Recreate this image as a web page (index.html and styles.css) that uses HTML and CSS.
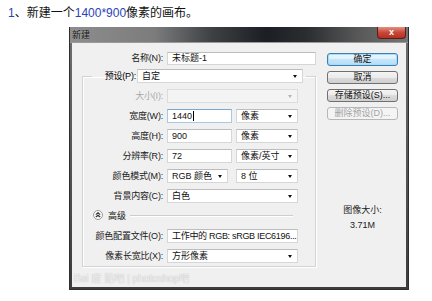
FILE: index.html
```html
<!DOCTYPE html>
<html lang="zh-CN">

<head>
  <meta charset="UTF-8">
  <title>新建</title>
  <link rel="stylesheet" href="styles.css">
</head>

<body>
  <p class="caption"><span class="num">1</span>、新建一个<span class="num">1400*900</span>像素的画布。</p>

  <div class="dialog">
    <div class="titlebar">
      <span class="title">新建</span>
      <span class="close">x</span>
    </div>

    <div class="client">
      <div class="form">
        <div class="nameRow">
          <div class="lbl">名称(N):</div>
          <div class="field">未标题-1</div>
        </div>

        <fieldset class="group">
          <legend>
            <span class="lbl presetLbl">预设(P):</span>
            <span class="field select presetSel">自定<i class="arrow"></i></span>
          </legend>

          <div class="rows">
            <div class="lbl off">大小(I):</div>
            <div class="field select disabled"><span></span><i class="arrow"></i></div>

            <div class="lbl">宽度(W):</div>
            <div class="pair">
              <div class="field focus w65">1440<span class="caret"></span></div>
              <div class="field select w62">像素<i class="arrow"></i></div>
            </div>

            <div class="lbl">高度(H):</div>
            <div class="pair">
              <div class="field w65">900</div>
              <div class="field select w62">像素<i class="arrow"></i></div>
            </div>

            <div class="lbl">分辨率(R):</div>
            <div class="pair">
              <div class="field w65">72</div>
              <div class="field select w62">像素/英寸<i class="arrow"></i></div>
            </div>

            <div class="lbl">颜色模式(M):</div>
            <div class="pair">
              <div class="field select w61">RGB 颜色<i class="arrow"></i></div>
              <div class="field select w62">8 位<i class="arrow"></i></div>
            </div>

            <div class="lbl">背景内容(C):</div>
            <div class="field select">白色<i class="arrow"></i></div>

            <div class="advanced">
              <svg class="toggle" width="10" height="10" viewBox="0 0 10 10">
                <circle cx="5" cy="5" r="4.5" fill="#fbfbfb" stroke="#9a9a9a" stroke-width="1"/>
                <path d="M2.8 4.6 L5 2.8 L7.2 4.6 M2.8 7 L5 5.2 L7.2 7" fill="none" stroke="#333" stroke-width="1.1"/>
              </svg>
              <span>高级</span>
              <span class="rule"></span>
            </div>

            <div class="lbl">颜色配置文件(O):</div>
            <div class="field select"><span class="tight">工作中的 RGB: sRGB IEC6196...</span><i class="arrow"></i></div>

            <div class="lbl">像素长宽比(X):</div>
            <div class="field select">方形像素<i class="arrow"></i></div>
          </div>
        </fieldset>
      </div>

      <div class="side">
        <button class="btn default">确定</button>
        <button class="btn">取消</button>
        <button class="btn">存储预设(S)...</button>
        <button class="btn" disabled>删除预设(D)...</button>

        <div class="sizeInfo">
          <div>图像大小:</div>
          <div>3.71M</div>
        </div>
      </div>
    </div>

    <div class="watermark">Bai<span class="paw">度</span>贴吧 | photoshop吧</div>
  </div>
</body>

</html>
```

FILE: styles.css
```css
body {
  margin: 0;
  background: #fff;
  font-family: "Liberation Sans", "Noto Sans CJK SC", sans-serif;
  color: #111;
}

.caption {
  margin: 0;
  padding: 5px 0 0 8px;
  font-size: 12px;
  line-height: 16px;
}

.num {
  color: #2a44b8;
}

/* window */

.dialog {
  position: relative;
  width: 338px;
  margin: 6px 0 0 69px;
  border: 1px solid #2e2e2e;
  border-top: 0;
  background: linear-gradient(#707070, #3c3c3c);
}

.titlebar {
  display: flex;
  justify-content: space-between;
  height: 16px;
  background: linear-gradient(90deg, #8d8d8d 0%, #7c7c7c 25%, #3d4144 42%, #1b1f23 58%, #2a2e31 70%, #575757 85%, #767676 100%);
  border-bottom: 1px solid #9a9a9a;
  box-sizing: border-box;
}

.title {
  padding: 3px 0 0 2px;
  font-size: 9px;
  line-height: 11px;
  color: #161616;
  text-shadow: 0 0 2px rgba(255, 255, 255, 0.35);
}

.close {
  width: 29px;
  height: 12px;
  margin-right: 2px;
  box-sizing: border-box;
  border: 1px solid #5b1d14;
  border-top: 0;
  border-radius: 0 0 4px 4px;
  background: linear-gradient(#e4907f, #c8473a 50%, #b2311f);
  color: #fff;
  font-size: 9px;
  font-weight: bold;
  line-height: 10px;
  text-align: center;
}

.client {
  display: flex;
  height: 244px;
  margin: 0 2px 2px;
  padding: 9px 0 0 10px;
  box-sizing: border-box;
  background: #f0f0f0;
}

/* form column */

.form {
  width: 234px;
}

.lbl {
  font-size: 9px;
  line-height: 14px;
  text-align: right;
  color: #1a1a1a;
  white-space: nowrap;
  letter-spacing: -0.2px;
}

.lbl.off {
  color: #a9a9a9;
}

.nameRow {
  display: grid;
  grid-template-columns: 81px 149px;
  column-gap: 4px;
  height: 13px;
}

.nameRow .lbl {
  line-height: 13px;
}

.nameRow .field {
  height: 13px;
  line-height: 11px;
}

.field {
  display: flex;
  align-items: center;
  height: 14px;
  box-sizing: border-box;
  padding: 0 5px 0 4px;
  border: 1px solid #d6d6d6;
  border-top-color: #bcbcbc;
  background: #fff;
  font-size: 9px;
  line-height: 12px;
  white-space: nowrap;
  overflow: hidden;
}

.select {
  justify-content: space-between;
}

.arrow {
  display: inline-block;
  flex: none;
  width: 0;
  height: 0;
  border-left: 2.5px solid transparent;
  border-right: 2.5px solid transparent;
  border-top: 3px solid #111;
}

.disabled {
  background: #f4f4f4;
  border-color: #dcdcdc;
}

.disabled .arrow {
  border-top-color: #b4b4b4;
}

.focus {
  border-color: #a9c8e6;
  border-top-color: #7aa6d2;
}

.caret {
  display: inline-block;
  width: 1px;
  height: 10px;
  margin-left: 1px;
  background: #000;
}

.tight {
  letter-spacing: -0.3px;
}

.group {
  width: 234px;
  min-width: 0;
  box-sizing: border-box;
  margin: 4px 0 0;
  padding: 0 16px 3px 0;
  border: 1px solid #d3d3d3;
  box-shadow: 1px 1px 0 #fff, inset 1px 1px 0 #fff;
}

.group legend {
  display: flex;
  gap: 1px;
  margin-left: 9px;
  padding: 0 3px 0 0;
}

.presetLbl {
  width: 44px;
  color: #000;
}

.presetSel {
  width: 166px;
}

.rows {
  display: grid;
  grid-template-columns: 80px 131px;
  grid-auto-rows: 14px;
  column-gap: 4px;
  row-gap: 6px;
  margin-top: 6px;
}

.pair {
  display: flex;
  justify-content: space-between;
}

.w65 {
  width: 65px;
}

.w62 {
  width: 62px;
}

.w61 {
  width: 61px;
}

.advanced {
  grid-column: 1 / -1;
  display: flex;
  align-items: center;
  gap: 5px;
  margin: 6px 5px 8px 0;
  padding-left: 10px;
  font-size: 9px;
}

.toggle {
  flex: none;
}

.rule {
  flex: 1;
  height: 1px;
  margin-left: -1px;
  background: #cdcdcd;
  box-shadow: 0 1px 0 #fff;
}

/* buttons column */

.side {
  display: flex;
  flex-direction: column;
  gap: 5px;
  width: 71px;
  margin: 1px 0 0 11px;
}

.btn {
  height: 13px;
  padding: 0;
  border: 1px solid #707070;
  border-radius: 3px;
  background: linear-gradient(#f4f4f4, #ebebeb 50%, #dcdcdc 50%, #cfcfcf);
  font-family: inherit;
  font-size: 9px;
  line-height: 11px;
  color: #111;
}

.btn.default {
  border-color: #3c7fb1;
  background: linear-gradient(#ecf7fd, #dcf0fb 50%, #c3e6fa 50%, #b5ddf6);
  box-shadow: inset 0 0 0 1px #a6dcf9;
}

.btn:disabled {
  border-color: #b5b8ba;
  background: #f4f4f4;
  color: #a3a3a3;
}

.sizeInfo {
  margin-top: 78px;
  font-size: 9px;
  line-height: 15px;
  text-align: center;
  color: #222;
}

.watermark {
  position: absolute;
  left: 4px;
  bottom: 4px;
  font-size: 10px;
  line-height: 12px;
  color: rgba(255, 255, 255, 0.8);
  text-shadow: 0 0 1px rgba(110, 110, 110, 0.6);
}

.paw {
  margin: 0 3px;
}
```
